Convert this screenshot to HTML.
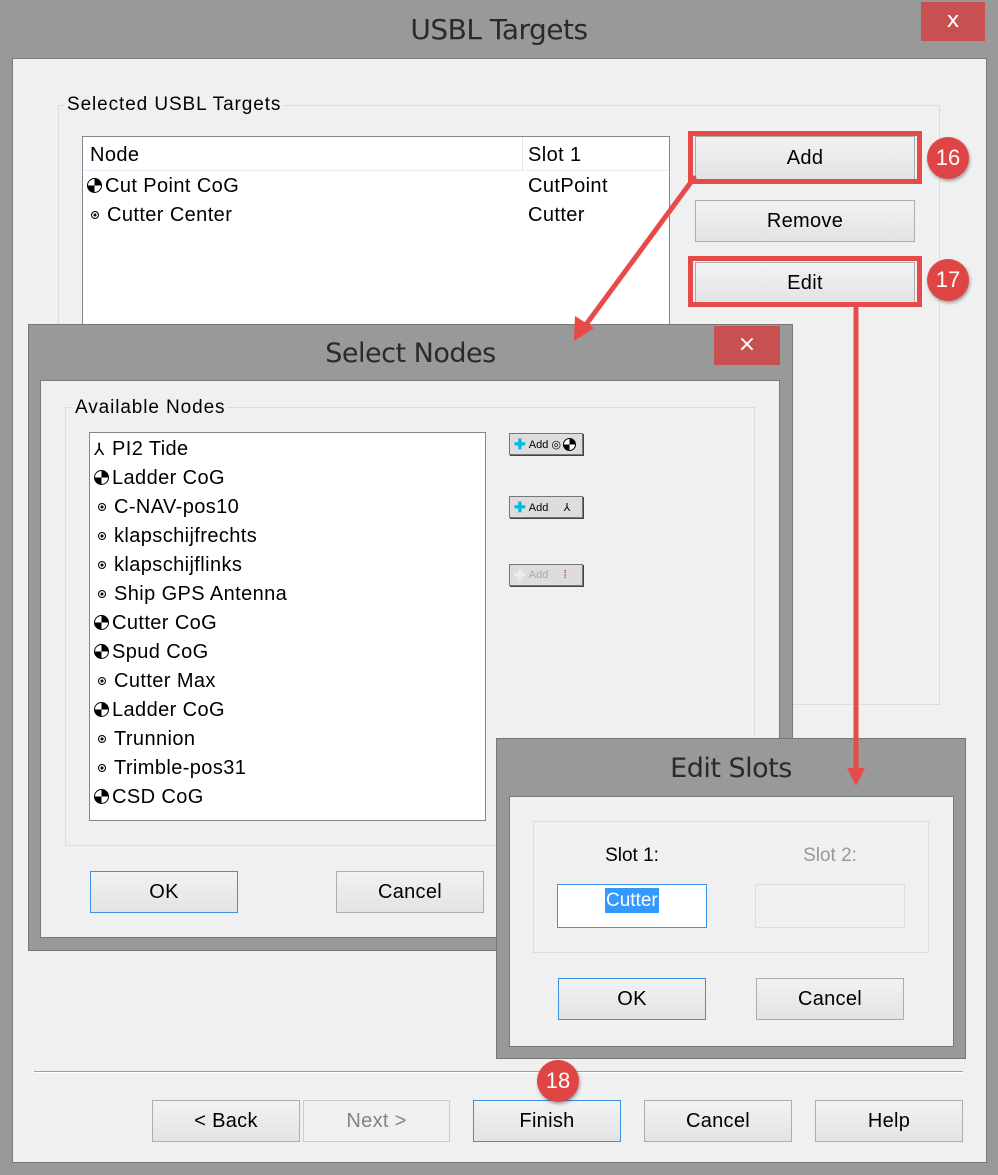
<!DOCTYPE html>
<html><head><style>
*{box-sizing:border-box;margin:0;padding:0}
body{width:998px;height:1175px;background:#999;position:relative;overflow:hidden;font-family:"Liberation Sans",Arial,sans-serif;color:#000}
.a{position:absolute}
.client{background:#f0f0f0;border:1px solid #7a7a7a}
.title{font-family:"DejaVu Sans","Liberation Sans",sans-serif;color:#2a2a2a;font-size:27px;text-align:center;font-weight:normal;letter-spacing:-0.5px}
.close{background:#c75050;color:#fff;text-align:center;font-size:22px;font-family:"DejaVu Sans",sans-serif}
.btn{border:1px solid #adadad;background:linear-gradient(#f2f2f2,#e3e3e3);font-size:20px;display:flex;align-items:center;justify-content:center;letter-spacing:0.3px}
.btn.blue{border-color:#3c91e6}
.grp{border:1px solid #dcdcdc}
.lbl{background:#f0f0f0;font-size:19px;padding:0 3px;letter-spacing:0.9px}
.list{background:#fff;border:1px solid #828790}
.row{position:absolute;font-size:20px;white-space:nowrap;height:29px;line-height:29px;letter-spacing:0.4px}
.cog{display:inline-block;width:15px;height:15px;border-radius:50%;border:1.5px solid #000;background:conic-gradient(#000 0 25%,#fff 0 50%,#000 0 75%,#fff 0);vertical-align:-1px;margin-right:3px}
.ring{display:inline-block;width:8px;height:8px;border-radius:50%;border:1px solid #000;box-shadow:inset 0 0 0 1.5px #fff,inset 0 0 0 3px #000;vertical-align:2px;margin:0 8px 0 5px}
.red{border:5px solid #e84a4a}
.badge{width:42px;height:42px;border-radius:50%;background:#e04545;color:#fff;font-size:22px;text-align:center;line-height:42px;box-shadow:1px 2px 3px rgba(0,0,0,.35)}
.sb{border:1px solid #777;background:#ddd;font-size:11px;height:22px;width:74px;display:flex;align-items:center;padding-left:4px;box-shadow:1px 1px 0 #444}
</style></head><body>
<div class="a title" style="left:0;top:13px;width:998px;font-size:28px">USBL Targets</div>
<div class="a close" style="left:921px;top:2px;width:64px;height:39px;line-height:38px">x</div>
<div class="a client" style="left:12px;top:58px;width:975px;height:1105px"></div>

<div class="a grp" style="left:58px;top:105px;width:882px;height:600px"></div>
<div class="a lbl" style="left:64px;top:94px">Selected USBL Targets</div>
<div class="a list" style="left:82px;top:136px;width:588px;height:200px"></div>
<div class="a" style="left:83px;top:137px;width:586px;height:34px;border-bottom:1px solid #e3eef9"></div>
<div class="a" style="left:522px;top:137px;width:1px;height:33px;background:#e5e5e5"></div>
<div class="row" style="left:90px;top:141px">Node</div>
<div class="row" style="left:528px;top:141px">Slot 1</div>
<div class="row" style="left:87px;top:172px"><span class="cog"></span>Cut Point CoG</div>
<div class="row" style="left:528px;top:172px">CutPoint</div>
<div class="row" style="left:86px;top:201px"><span class="ring"></span>Cutter Center</div>
<div class="row" style="left:528px;top:201px">Cutter</div>

<div class="a btn" style="left:695px;top:136px;width:220px;height:44px">Add</div>
<div class="a btn" style="left:695px;top:200px;width:220px;height:42px">Remove</div>
<div class="a btn" style="left:695px;top:262px;width:220px;height:42px">Edit</div>
<div class="a red" style="left:688px;top:131px;width:234px;height:53px"></div>
<div class="a red" style="left:688px;top:256px;width:234px;height:51px"></div>
<div class="a badge" style="left:927px;top:137px">16</div>
<div class="a badge" style="left:927px;top:259px">17</div>

<div class="a" style="left:34px;top:1071px;width:929px;height:2px;border-top:1px solid #a0a0a0;border-bottom:1px solid #fff"></div>
<div class="a btn" style="left:152px;top:1100px;width:148px;height:42px">&lt; Back</div>
<div class="a btn" style="left:303px;top:1100px;width:147px;height:42px;color:#838383;border-color:#ccc;background:#f0f0f0">Next &gt;</div>
<div class="a btn blue" style="left:473px;top:1100px;width:148px;height:42px">Finish</div>
<div class="a btn" style="left:644px;top:1100px;width:148px;height:42px">Cancel</div>
<div class="a btn" style="left:815px;top:1100px;width:148px;height:42px">Help</div>
<div class="a badge" style="left:537px;top:1060px">18</div>

<!-- Select Nodes -->
<div class="a" style="left:28px;top:324px;width:765px;height:627px;background:#999;border:1px solid #777"></div>
<div class="a title" style="left:28px;top:338px;width:765px">Select Nodes</div>
<div class="a close" style="left:714px;top:326px;width:66px;height:39px;line-height:38px">×</div>
<div class="a client" style="left:40px;top:380px;width:740px;height:558px"></div>
<div class="a grp" style="left:65px;top:407px;width:690px;height:439px"></div>
<div class="a lbl" style="left:72px;top:397px">Available Nodes</div>
<div class="a list" style="left:89px;top:432px;width:397px;height:389px"></div>
<div class="row" style="left:94px;top:435px"><span style="display:inline-block;width:18px;font-size:17px">⅄</span>PI2 Tide</div>
<div class="row" style="left:94px;top:464px"><span class="cog"></span>Ladder CoG</div>
<div class="row" style="left:93px;top:493px"><span class="ring"></span>C-NAV-pos10</div>
<div class="row" style="left:93px;top:522px"><span class="ring"></span>klapschijfrechts</div>
<div class="row" style="left:93px;top:551px"><span class="ring"></span>klapschijflinks</div>
<div class="row" style="left:93px;top:580px"><span class="ring"></span>Ship GPS Antenna</div>
<div class="row" style="left:94px;top:609px"><span class="cog"></span>Cutter CoG</div>
<div class="row" style="left:94px;top:638px"><span class="cog"></span>Spud CoG</div>
<div class="row" style="left:93px;top:667px"><span class="ring"></span>Cutter Max</div>
<div class="row" style="left:94px;top:696px"><span class="cog"></span>Ladder CoG</div>
<div class="row" style="left:93px;top:725px"><span class="ring"></span>Trunnion</div>
<div class="row" style="left:93px;top:754px"><span class="ring"></span>Trimble-pos31</div>
<div class="row" style="left:94px;top:783px"><span class="cog"></span>CSD CoG</div>

<div class="a sb" style="left:509px;top:433px"><b style="color:#0bd;font-size:14px">✚</b>&nbsp;Add ◎<span class="cog" style="width:13px;height:13px;margin-left:2px"></span></div>
<div class="a sb" style="left:509px;top:496px"><b style="color:#0bd;font-size:14px">✚</b>&nbsp;Add&nbsp;&nbsp;&nbsp;&nbsp;&nbsp;⅄</div>
<div class="a sb" style="left:509px;top:564px;color:#aaa"><b style="color:#eee;font-size:14px">✚</b>&nbsp;Add&nbsp;&nbsp;&nbsp;&nbsp;&nbsp;<span style="color:#c00">⁞</span></div>

<div class="a btn blue" style="left:90px;top:871px;width:148px;height:42px">OK</div>
<div class="a btn" style="left:336px;top:871px;width:148px;height:42px">Cancel</div>

<!-- Edit Slots -->
<div class="a" style="left:496px;top:738px;width:470px;height:321px;background:#999;border:1px solid #777"></div>
<div class="a title" style="left:496px;top:753px;width:470px">Edit Slots</div>
<div class="a client" style="left:509px;top:796px;width:445px;height:251px"></div>
<div class="a grp" style="left:533px;top:821px;width:396px;height:132px"></div>
<div class="a" style="left:557px;top:845px;width:150px;text-align:center;font-size:19px">Slot 1:</div>
<div class="a" style="left:755px;top:845px;width:150px;text-align:center;font-size:19px;color:#999">Slot 2:</div>
<div class="a" style="left:557px;top:884px;width:150px;height:44px;background:#fff;border:1px solid #3c91e6"></div>
<div class="a" style="left:605px;top:888px;height:25px;background:#3399ff;color:#fff;font-size:19px;line-height:25px;padding:0 1px">Cutter</div>
<div class="a" style="left:755px;top:884px;width:150px;height:44px;background:#f0f0f0;border:1px solid #ddd"></div>
<div class="a btn blue" style="left:558px;top:978px;width:148px;height:42px">OK</div>
<div class="a btn" style="left:756px;top:978px;width:148px;height:42px">Cancel</div>

<svg class="a" style="left:0;top:0" width="998" height="1175">
<g stroke="#e84a4a" stroke-width="5" fill="none" stroke-linecap="round">
<line x1="694" y1="178" x2="582" y2="330"/>
<line x1="856" y1="306" x2="856" y2="770"/>
</g>
<polygon points="574,341 575,316 594,328" fill="#e84a4a"/>
<polygon points="847,768 865,768 856,786" fill="#e84a4a"/>
</svg>
</body></html>
